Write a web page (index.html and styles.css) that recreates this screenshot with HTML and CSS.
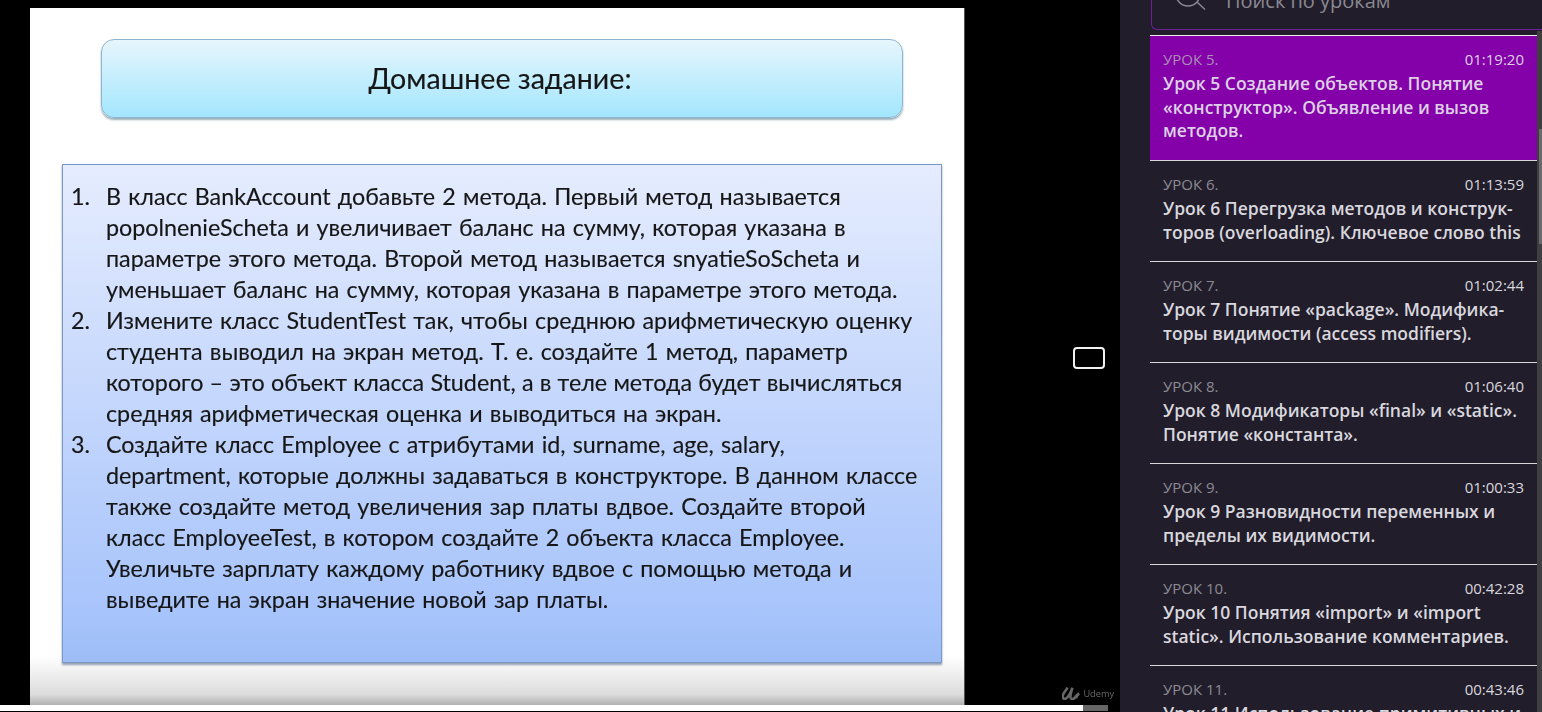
FILE: index.html
```html
<!DOCTYPE html>
<html lang="ru">
<head>
<meta charset="utf-8">
<title>Урок 5</title>
<link rel="stylesheet" href="styles.css">
</head>
<body>
<div class="page">
  <main class="player">
    <div class="stage">
      <div class="slide">
        <div class="title-box"><span class="slide-text">Домашнее задание:</span></div>
        <div class="task-box">
          <ol class="tasks slide-text">
            <li>В класс BankAccount добавьте 2 метода. Первый метод называется<br>popolnenieScheta и увеличивает баланс на сумму, которая указана в<br>параметре этого метода. Второй метод называется snyatieSoScheta и<br>уменьшает баланс на сумму, которая указана в параметре этого метода.</li>
            <li>Измените класс StudentTest так, чтобы среднюю арифметическую оценку<br>студента выводил на экран метод. Т. е. создайте 1 метод, параметр<br><span class="tight">которого – это объект класса Student, а в теле метода будет вычисляться</span><br>средняя арифметическая оценка и выводиться на экран.</li>
            <li>Создайте класс Employee с атрибутами id, surname, age, salary,<br>department, которые должны задаваться в конструкторе. В данном классе<br>также создайте метод увеличения зар платы вдвое. Создайте второй<br>класс EmployeeTest, в котором создайте 2 объекта класса Employee.<br>Увеличьте зарплату каждому работнику вдвое с помощью метода и<br>выведите на экран значение новой зар платы.</li>
          </ol>
        </div>
      </div>
      <div class="side-black">
        <span class="caption-btn"></span>
        <div class="udemy">
          <svg class="udemy-mark" viewBox="0 0 18 13" aria-hidden="true"><path d="M5.500 .5C4.500 3 1.500 5.500 .8 8.500C.3 11 2 12.700 4 11.500C6.500 10 9 5 10.500 .8C9.500 4 8 8 8.500 10.500C9 12.500 11 12.500 12.500 11C14 9.500 15 7.500 17 6.500C15.500 8 14 10 14.300 11.500" fill="none" stroke="#666" stroke-width="2.600"/></svg>
          <span>Udemy</span>
        </div>
      </div>
    </div>
    <div class="progress"><span class="progress-done"></span><span class="progress-buffer"></span></div>
  </main>
  <aside class="sidebar">
    <div class="search">
      <svg class="search-icon" viewBox="0 0 36 32" aria-hidden="true"><circle cx="16" cy="4" r="12" fill="none" stroke="#8b8992" stroke-width="1.500"/><path d="M25 12l8 7.500" stroke="#8b8992" stroke-width="1.500" fill="none"/></svg>
      <span class="search-text">Поиск по урокам</span>
    </div>
    <div class="lessons-wrap">
      <ul class="lessons">
        <li class="lesson active">
          <div class="meta"><span class="num">УРОК 5.</span><span class="time">01:19:20</span></div>
          <div class="name">Урок 5 Создание объектов. Понятие<br>«конструктор». Объявление и вызов<br>методов.</div>
        </li>
        <li class="lesson">
          <div class="meta"><span class="num">УРОК 6.</span><span class="time">01:13:59</span></div>
          <div class="name">Урок 6 Перегрузка методов и конструк-<br>торов (overloading). Ключевое слово this</div>
        </li>
        <li class="lesson">
          <div class="meta"><span class="num">УРОК 7.</span><span class="time">01:02:44</span></div>
          <div class="name">Урок 7 Понятие «package». Модифика-<br>торы видимости (access modifiers).</div>
        </li>
        <li class="lesson">
          <div class="meta"><span class="num">УРОК 8.</span><span class="time">01:06:40</span></div>
          <div class="name">Урок 8 Модификаторы «final» и «static».<br>Понятие «константа».</div>
        </li>
        <li class="lesson">
          <div class="meta"><span class="num">УРОК 9.</span><span class="time">01:00:33</span></div>
          <div class="name">Урок 9 Разновидности переменных и<br>пределы их видимости.</div>
        </li>
        <li class="lesson">
          <div class="meta"><span class="num">УРОК 10.</span><span class="time">00:42:28</span></div>
          <div class="name">Урок 10 Понятия «import» и «import<br>static». Использование комментариев.</div>
        </li>
        <li class="lesson">
          <div class="meta"><span class="num">УРОК 11.</span><span class="time">00:43:46</span></div>
          <div class="name">Урок 11 Использование примитивных и<br>ссылочных типов данных.</div>
        </li>
      </ul>
      <div class="scrollbar"><span class="scroll-thumb"></span></div>
    </div>
  </aside>
</div>
</body>
</html>
```
FILE: styles.css
```css
* { box-sizing: border-box; }
html, body { margin: 0; height: 100%; overflow: hidden; background: #000; }
.page { display: flex; width: 1542px; height: 712px; }

.player { width: 1120px; display: flex; flex-direction: column; background: #000; }
.stage { display: flex; height: 705px; padding: 8px 0 0 30px; }
.slide {
  width: 935px; height: 697px; padding: 31px 0 0 71px;
  background: linear-gradient(#fff 0, #fff 93%, #ececec 96%, #dcdcdc 98.500%, #b0b0b0 100%);
  border-right: 1px solid #555;
  font-family: "Lato", "Liberation Sans", sans-serif;
  color: #161616;
}
.slide-text { filter: blur(.35px); -webkit-text-stroke: .15px #161616; }
.title-box {
  width: 802px; height: 79px; line-height: 77px; text-align: center;
  padding-right: 4px;
  border: 1px solid #8fb4cf; border-radius: 13px;
  background: linear-gradient(#e6f6fd, #a3e6fd);
  box-shadow: 0 2px 2px rgba(70,110,130,.55);
  font-size: 28.600px;
}
.title-box .slide-text { display: inline-block; }
.task-box {
  width: 880px; height: 499px; margin: 46px 0 0 -39px;
  padding: 16px 0 0 0;
  border: 1px solid #7c98c4;
  background: linear-gradient(#e5ecfe, #a6c3fb 92%, #9dbcf5);
  box-shadow: 0 2px 2px rgba(60,80,120,.55);
}
.tasks {
  margin: 0; padding: 0 0 0 43px; list-style: none; counter-reset: task;
  font-size: 23.300px; line-height: 31px; word-spacing: 1.200px; white-space: nowrap;
}
.tasks li { counter-increment: task; }
.tasks li::before { content: counter(task) "."; display: inline-block; width: 35px; margin-left: -35px; }
.tight { word-spacing: .3px; }

.side-black { flex: 1; display: flex; flex-direction: column; align-items: flex-end; }
.caption-btn {
  display: block; width: 32px; height: 22px; margin: 339px 15px 0 0;
  border: 2px solid #f2f2f2; border-radius: 4px;
}
.udemy {
  margin-top: auto; margin-bottom: 5px; margin-right: 6px; display: flex; align-items: center; gap: 3px;
  color: #6a6a6a; font: 9.200px/13px "Open Sans", sans-serif; filter: blur(.3px);
}
.udemy-mark { width: 18px; height: 13px; }

.progress { display: flex; height: 6px; }
.progress-done { width: 1083px; background: #fff; }
.progress-buffer { width: 25px; background: #666; }

.sidebar {
  width: 422px; height: 712px; background: #211d2b;
  font-family: "Open Sans", sans-serif;
  display: flex; flex-direction: column; overflow: hidden;
}
.search {
  flex: none; height: 30px; margin: 0 0 0 31px;
  border: 1px solid #701f9c; border-top: 0; border-right: 0; border-radius: 0 0 0 6px;
  position: relative; overflow: hidden;
}
.search-icon { position: absolute; left: 20px; top: -10px; width: 36px; height: 32px; }
.search-text { position: absolute; left: 74px; top: -11px; font-size: 20px; line-height: 24px; color: #8b8992; white-space: nowrap; }
.lessons-wrap { flex: 1; display: flex; padding-top: 5px; min-height: 0; }
.lessons { list-style: none; margin: 0 0 0 30px; padding: 0; width: 387px; }
.lesson { padding: 14px 13px 0; border-top: 1px solid #d9d8dc; height: 101px; color: #d9d7de; }
.lesson.active { height: 125px; background: #8400a8; color: #dcd0e6; border-top-color: #ececec; }
.meta { display: flex; justify-content: space-between; font-size: 15px; line-height: 19px; }
.num { color: #8d8b94; }
.active .num { color: #a98fb6; }
.name { margin-top: 3px; font-size: 17.500px; line-height: 23.700px; font-weight: 600; white-space: nowrap; }
.scrollbar { width: 5px; margin-top: -4px; background: #3f3f3f; display: flex; justify-content: flex-end; align-items: flex-start; }
.scroll-thumb { display: block; width: 3px; height: 115px; margin-top: 98px; background: #6a6a6a; }
```
